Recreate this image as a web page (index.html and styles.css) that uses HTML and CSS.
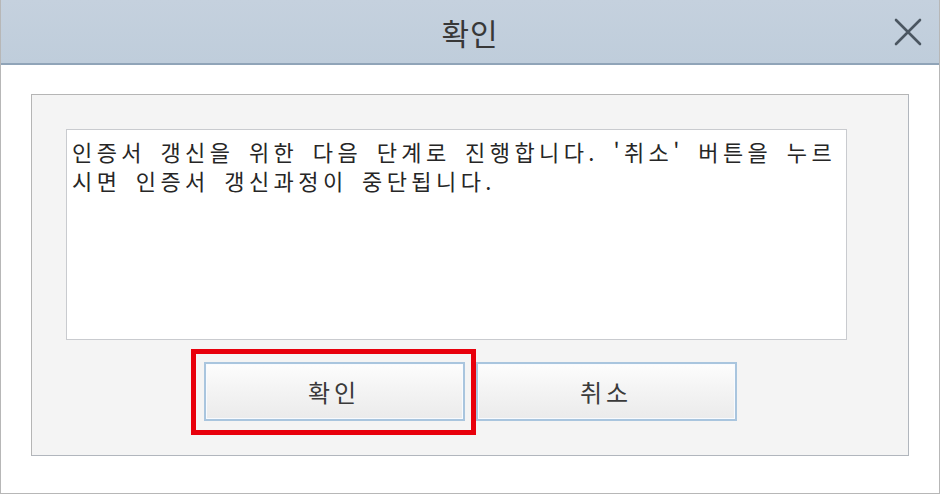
FILE: index.html
```html
<!DOCTYPE html>
<html lang="ko">
<head>
<meta charset="utf-8">
<title>확인</title>
<link rel="stylesheet" href="styles.css">
</head>
<body>
<div class="dialog">
  <div class="titlebar">
    <span class="title">확인</span>
    <button class="close" aria-label="닫기">
      <svg width="28" height="28" viewBox="0 0 28 28"><path d="M2 2 L26 26 M26 2 L2 26" stroke="#4b5661" stroke-width="2.6" fill="none" stroke-linecap="round"/></svg>
    </button>
  </div>
  <div class="content">
    <div class="panel">
      <div class="message">인증서 갱신을 위한 다음 단계로 진행합니다. '취소' 버튼을 누르<br>시면 인증서 갱신과정이 중단됩니다.</div>
      <div class="actions">
        <div class="highlight">
          <button class="btn">확인</button>
        </div>
        <button class="btn">취소</button>
      </div>
    </div>
  </div>
</div>
</body>
</html>
```
FILE: styles.css
```css
html, body {
  margin: 0;
  padding: 0;
  background: #ffffff;
}
body {
  font-family: "Noto Sans CJK KR", "Noto Sans", sans-serif;
  color: #333;
}
.dialog {
  width: 940px;
  height: 494px;
  box-sizing: border-box;
  border: 1px solid #b7b7b7;
  border-top: none;
  background: #ffffff;
  display: flex;
  flex-direction: column;
}
.titlebar {
  height: 63px;
  flex: none;
  background: linear-gradient(#c5d1de, #bfcddb);
  border-bottom: 2px solid #90a4b8;
  display: flex;
  align-items: center;
  justify-content: center;
  position: relative;
}
.title {
  font-size: 30px;
  color: #383838;
  letter-spacing: 1px;
  margin-top: 1px;
}
.close {
  position: absolute;
  right: 16px;
  top: 17px;
  width: 30px;
  height: 30px;
  padding: 1px;
  border: none;
  background: transparent;
  display: flex;
  align-items: center;
  justify-content: center;
}
.content {
  flex: 1;
  padding: 29px 30px 0 30px;
}
.panel {
  height: 362px;
  box-sizing: border-box;
  border: 1px solid #b1b6bd;
  border-top-color: #b5b5b5;
  border-left-color: #b5b5b5;
  background: #f4f4f4;
  padding: 34px 61px 0 34px;
  display: flex;
  flex-direction: column;
}
.message {
  height: 211px;
  box-sizing: border-box;
  border: 1px solid #c9cbcf;
  background: #ffffff;
  padding: 7px 0 7px 5px;
  font-size: 22px;
  line-height: 29px;
  letter-spacing: 4.4px;
  word-spacing: 4px;
  white-space: nowrap;
  overflow: hidden;
  color: #262626;
}
.actions {
  margin-top: 22px;
  margin-left: -34px;
  margin-right: -61px;
  display: flex;
  justify-content: center;
  gap: 11px;
}
.highlight {
  position: relative;
  display: flex;
}
.highlight::after {
  content: "";
  position: absolute;
  top: -13px;
  left: -13px;
  right: -11px;
  bottom: -14px;
  border: 5px solid #e8000c;
  pointer-events: none;
}
.btn {
  width: 261px;
  height: 59px;
  box-sizing: border-box;
  border: 2px solid #a9c5de;
  box-shadow: inset 0 0 0 1px #f8fbff;
  background: linear-gradient(#fdfdfd, #f3f3f3 50%, #ebebeb);
  font-family: "Noto Sans CJK KR", "Noto Sans", sans-serif;
  font-size: 24px;
  letter-spacing: 4px;
  color: #3a3a3a;
  padding: 0;
}
```
